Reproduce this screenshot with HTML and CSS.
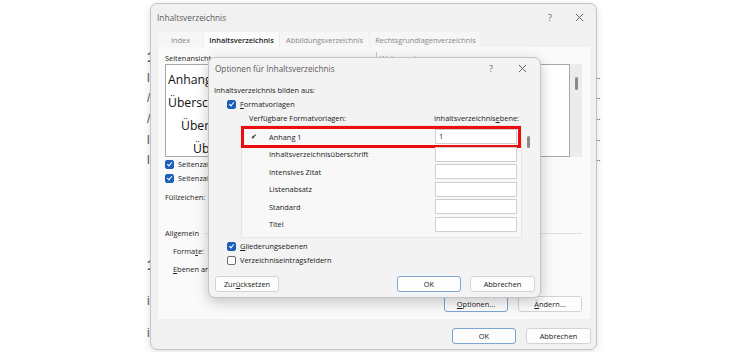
FILE: index.html
```html
<!DOCTYPE html>
<html lang="de">
<head>
  <meta charset="UTF-8" />
  <title>Inhaltsverzeichnis</title>
  <link rel="stylesheet" href="styles.css">
</head>
<body>

  <!-- Word document behind the dialogs -->
  <div class="doc">
    <div class="doc-line head"><span>1</span><span></span></div>
    <div class="doc-line"><span>l</span><span class="dots">··</span></div>
    <div class="doc-line"><span>/</span><span class="dots">··</span></div>
    <div class="doc-line"><span>/</span><span class="dots">··</span></div>
    <div class="doc-line"><span>l</span><span class="dots">··</span></div>
    <div class="doc-line"><span>l</span><span class="dots">··</span></div>
    <div class="doc-gap"></div>
    <div class="doc-line head"><span>1</span><span></span></div>
    <div class="doc-line wide"><span>i</span><span></span></div>
    <div class="doc-line wide"><span>i</span><span></span></div>
  </div>

  <div class="dialog outer">
    <div class="titlebar">
      <span class="title">Inhaltsverzeichnis</span>
      <span class="tb-btns">
        <span class="help">?</span>
        <svg class="close" viewBox="0 0 10 10"><path d="M1 1L9 9M9 1L1 9" /></svg>
      </span>
    </div>

    <div class="tabs">
      <span class="tab t-index">Index</span>
      <span class="tab active t-toc">Inhaltsverzeichnis</span>
      <span class="tab t-abb">Abbildungsverzeichnis</span>
      <span class="tab t-rg">Rechtsgrundlagenverzeichnis</span>
    </div>

    <div class="pane">
      <div class="previews">
        <div class="col-left">
          <div class="label">Seitenansicht</div>
          <div class="preview">
            <div class="pv">Anhang 1</div>
            <div class="pv">Überschrift 1</div>
            <div class="pv lv2">Überschrift 2</div>
            <div class="pv lv3">Überschrift 3</div>
          </div>
          <div class="chk"><span class="box on"></span>Seitenzahlen anzeigen</div>
          <div class="chk"><span class="box on"></span>Seitenzahlen rechtsbündig</div>
          <div class="field">Füllzeichen:</div>
        </div>
        <div class="col-right">
          <div class="label web-label">Webvorschau</div>
          <div class="web">
            <div class="web-box"></div>
            <div class="web-scroll"><span class="thumb"></span></div>
          </div>
        </div>
      </div>

      <div class="group">Allgemein<span class="rule"></span></div>
      <div class="field ind">Forma<u>t</u>e:</div>
      <div class="field ind"><u>E</u>benen anzeigen:</div>

      <div class="pane-btns">
        <span class="btn default"><u>O</u>ptionen...</span>
        <span class="btn"><u>Ä</u>ndern...</span>
      </div>
    </div>

    <div class="footer">
      <span class="btn default">OK</span>
      <span class="btn">Abbrechen</span>
    </div>
  </div>

  <div class="dialog inner">
    <div class="titlebar small">
      <span class="title">Optionen für Inhaltsverzeichnis</span>
      <span class="tb-btns">
        <span class="help">?</span>
        <svg class="close" viewBox="0 0 10 10"><path d="M1 1L9 9M9 1L1 9" /></svg>
      </span>
    </div>

    <div class="body">
      <div class="text">Inhaltsverzeichnis bilden aus:</div>
      <div class="chk ind1"><span class="box on"></span><u>F</u>ormatvorlagen</div>

      <div class="heads">
        <span class="style-head">Verfügbare Formatvorlagen:</span>
        <span>Inhaltsverzeichnis<u>e</u>bene:</span>
      </div>

      <div class="list-wrap">
        <div class="list">
          <div class="row"><span class="tick">✔</span><span class="name">Anhang 1</span><span class="lvl">1</span><span class="mark"></span></div>
          <div class="row"><span class="tick"></span><span class="name">Inhaltsverzeichnisüberschrift</span><span class="lvl"></span></div>
          <div class="row"><span class="tick"></span><span class="name">Intensives Zitat</span><span class="lvl"></span></div>
          <div class="row"><span class="tick"></span><span class="name">Listenabsatz</span><span class="lvl"></span></div>
          <div class="row"><span class="tick"></span><span class="name">Standard</span><span class="lvl"></span></div>
          <div class="row"><span class="tick"></span><span class="name">Titel</span><span class="lvl"></span></div>
        </div>
        <div class="list-scroll"><span class="thumb"></span></div>
      </div>

      <div class="chk ind1"><span class="box on"></span><u>G</u>liederungsebenen</div>
      <div class="chk ind1"><span class="box"></span>Verzeichniseintragsfeldern</div>

      <div class="inner-btns">
        <span class="btn">Zur<u>ü</u>cksetzen</span>
        <span class="spacer"></span>
        <span class="btn default">OK</span>
        <span class="btn">Abbrechen</span>
      </div>
    </div>
  </div>

</body>
</html>
```

FILE: styles.css
```css
body {
  margin: 0;
  width: 750px;
  height: 352px;
  overflow: hidden;
  background: #fff;
  font-family: "Open Sans", "Noto Sans", sans-serif;
  font-size: 7.4px;
  color: #222;
  position: relative;
}

u {
  text-decoration: underline;
}

/* document behind */
.doc {
  padding: 47px 0 0 147px;
  width: 453px;
}

.doc-line {
  height: 20.6px;
  display: flex;
  justify-content: space-between;
  align-items: center;
  font-family: "Liberation Sans", sans-serif;
  font-size: 12px;
  color: #555;
}

.doc-line.head {
  color: #2a5d75;
  font-weight: bold;
  font-size: 14px;
}

.doc-line.wide {
  height: 32.5px;
  align-items: flex-end;
}

.doc-line .dots {
  font-size: 9px;
  letter-spacing: -1px;
  color: #444;
}

.doc-gap {
  height: 84px;
}

/* dialogs */
.dialog {
  position: absolute;
  box-sizing: border-box;
  background: #f1f1f1;
  border: 1px solid #c4c4c4;
  border-radius: 7px;
}

.outer {
  left: 150px;
  top: 3px;
  width: 447px;
  height: 347px;
  box-shadow: 0 2px 8px rgba(0, 0, 0, 0.12);
}

.inner {
  left: 208px;
  top: 57px;
  width: 333px;
  height: 241px;
  background: #f3f3f3;
  box-shadow: 0 4px 14px rgba(0, 0, 0, 0.22);
}

.titlebar {
  height: 26px;
  display: flex;
  align-items: center;
  justify-content: space-between;
  padding: 0 12px 0 6px;
}

.titlebar .title {
  font-size: 8.3px;
  color: #5c5c5c;
}

.tb-btns {
  display: flex;
  align-items: center;
  gap: 23px;
}

.help {
  font-size: 9px;
  color: #666;
}

.close {
  width: 9px;
  height: 9px;
  stroke: #555;
  stroke-width: 1;
  fill: none;
}

.titlebar.small {
  height: 21px;
  padding: 0 13px 0 6px;
}

.titlebar.small .title {
  font-size: 8.2px;
}

.titlebar.small .tb-btns {
  gap: 25px;
}

/* tabs */
.tabs {
  display: flex;
  height: 15px;
  margin: 2px 0 0 7px;
}

.tab {
  flex: none;
  display: flex;
  align-items: center;
  justify-content: center;
  white-space: nowrap;
  background: #f6f6f6;
  color: #888;
  border-right: 1px solid #ececec;
}

.tab.active {
  background: #fbfbfb;
  color: #222;
  font-weight: 600;
}

.t-index { width: 45px; }
.t-toc { width: 75px; }
.t-abb { width: 89px; }
.t-rg { width: 111px; }

.pane {
  margin-left: 7px;
  width: 432px;
  height: 272px;
  box-sizing: border-box;
  background: #fafafa;
  padding: 5px 8px 0 7px;
}

.previews {
  display: flex;
  gap: 12px;
}

.label {
  height: 12px;
  line-height: 12px;
}

.web-label {
  border-left: 1px solid #c8c8c8;
  padding-left: 3px;
  color: #999;
}

.col-left {
  width: 200px;
}

.preview {
  height: 93px;
  box-sizing: border-box;
  border: 1px solid #a8a8a8;
  background: #fff;
  padding: 3px 0 0 2px;
}

.pv {
  height: 23px;
  line-height: 23px;
  font-size: 12.2px;
  color: #111;
  white-space: nowrap;
}

.pv.lv2 { padding-left: 13px; }
.pv.lv3 { padding-left: 25px; }

.chk {
  display: flex;
  align-items: center;
  height: 14px;
  white-space: nowrap;
}

.box {
  flex: none;
  width: 9px;
  height: 9px;
  box-sizing: border-box;
  border: 1px solid #6e6e6e;
  border-radius: 2px;
  background: #fff;
  margin-right: 4px;
  position: relative;
}

.box.on {
  background: #1c5fba;
  border-color: #1c5fba;
}

.box.on::after {
  content: "";
  position: absolute;
  left: 2px;
  top: 0;
  width: 2px;
  height: 4px;
  border: solid #fff;
  border-width: 0 1px 1px 0;
  transform: rotate(40deg);
}

.col-left .chk:first-of-type {
  margin-top: 2px;
}

.field {
  height: 18px;
  line-height: 18px;
  margin-top: 3px;
}

.col-right {
  flex: 1;
}

.web {
  display: flex;
  height: 93px;
}

.web-box {
  width: 194px;
  box-sizing: border-box;
  border: 1px solid #a8a8a8;
  background: #fff;
}

.web-scroll {
  width: 12px;
  background: #ececec;
  display: flex;
  justify-content: center;
  padding-top: 13px;
  box-sizing: border-box;
}

.web-scroll .thumb {
  width: 3px;
  height: 13px;
  border-radius: 2px;
  background: #8a8a8a;
}

.group {
  display: flex;
  align-items: center;
  gap: 6px;
  margin-top: 21px;
  height: 12px;
  margin-bottom: 3px;
}

.group .rule {
  flex: 1;
  height: 1px;
  background: #e0e0e0;
}

.field.ind {
  padding-left: 8px;
  margin-top: 0;
}

.pane-btns {
  display: flex;
  justify-content: flex-end;
  gap: 10px;
  margin-top: 18px;
}

.btn {
  display: flex;
  align-items: center;
  justify-content: center;
  width: 64px;
  height: 16px;
  box-sizing: border-box;
  background: #fdfdfd;
  border: 1px solid #d3d3d3;
  border-radius: 3px;
  color: #222;
}

.btn.default {
  border-color: #7ea6d3;
}

.footer {
  display: flex;
  justify-content: flex-end;
  gap: 10px;
  padding: 9px 5px 0 0;
}

.footer .btn:last-child,
.inner-btns .btn:last-child {
  width: 65px;
}

/* options dialog body */
.inner .body {
  padding: 0 5px;
}

.text {
  height: 14px;
  line-height: 14px;
  margin-top: 4px;
}

.chk.ind1 {
  padding-left: 13px;
}

.heads {
  display: flex;
  height: 14px;
  align-items: center;
  padding-left: 35px;
  white-space: nowrap;
}

.style-head {
  width: 185px;
}

.list-wrap {
  display: flex;
  margin-left: 27px;
  height: 113px;
}

.list {
  width: 282px;
  box-sizing: border-box;
  background: #f8f8f8;
  border: 1px solid #e6e6e6;
  padding-top: 2px;
}

.row {
  position: relative;
  display: flex;
  align-items: center;
  height: 17.5px;
}

.tick {
  width: 16px;
  padding-left: 9px;
  font-size: 7px;
  color: #111;
}

.name {
  width: 166px;
  padding-left: 2px;
  white-space: nowrap;
}

.lvl {
  width: 82px;
  height: 15px;
  box-sizing: border-box;
  background: #fff;
  border: 1px solid #cfcfcf;
  padding-left: 3px;
  line-height: 13px;
}

/* red highlight drawn over the first row */
.mark {
  position: absolute;
  left: -1px;
  top: -2px;
  width: 280px;
  height: 22px;
  box-sizing: border-box;
  border: 3px solid #ee0d0d;
}

.list-scroll {
  width: 13px;
  display: flex;
  justify-content: center;
  padding-top: 11px;
}

.list-scroll .thumb {
  width: 3px;
  height: 12px;
  border-radius: 2px;
  background: #8a8a8a;
}

.list-wrap + .chk {
  margin-top: 1px;
}

.inner-btns {
  display: flex;
  gap: 9px;
  margin-top: 9px;
  padding-left: 1px;
}

.inner-btns .spacer {
  flex: 1;
}
```
